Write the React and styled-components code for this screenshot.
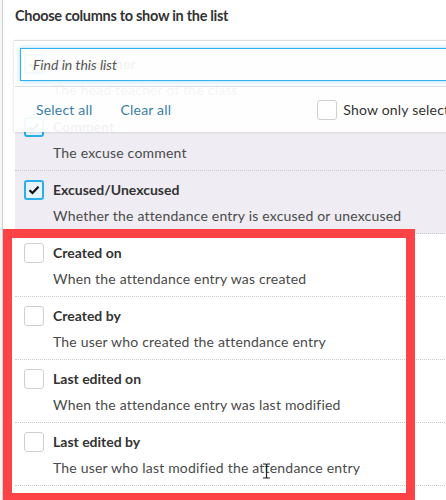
import React from "react";
import styled, {createGlobalStyle} from "styled-components";

const GlobalStyle = createGlobalStyle`
    html, body {
        margin: 0;
        padding: 0;
        background: #f6f6f6;
        overflow: hidden;
    }
    body {
        font-family: Lato, "Open Sans", "Liberation Sans", sans-serif;
        color: #333;
    }
`;

const Page = styled.div`
    position: relative;
    width: 446px;
    height: 500px;
    overflow: hidden;
    padding-left: 2px;
    box-sizing: border-box;
`;

const Dialog = styled.div`
    width: 720px;
    height: 100%;
    background: #fff;
    border-left: 1px solid #cfcfcf;
`;

const Header = styled.div`
    height: 40px;
    box-sizing: border-box;
    padding: 7px 12px 0;
    line-height: 18px;
    font-size: 14.5px;
    font-weight: 700;
    color: #333;
    letter-spacing: -0.3px;
`;

const Body = styled.div`
    position: relative;
    margin-left: 11px;
`;

const List = styled.div`
    padding-top: 4px;
    border-top: 1px solid #dcdcdc;
    margin-left: 1px;
`;

const Row = styled.div`
    display: flex;
    gap: 9px;
    padding: 9px 0 0 9px;
    box-sizing: border-box;
    height: 63px;
    border-bottom: 1px dotted #c9c9c9;
    background: ${props => (props.selected ? "#efedf3" : "#fff")};
`;

const Box = styled.div`
    flex: none;
    width: 20px;
    height: 20px;
    box-sizing: border-box;
    border-radius: 3px;
    border: ${props => (props.checked ? "2px solid #2aaeee" : "1px solid #cfcfcf")};
    background: ${props => (props.checked ? "#e8f4fc" : "#fff")};
    display: flex;
    align-items: center;
    justify-content: center;
`;

const Texts = styled.div`
    display: flex;
    flex-direction: column;
`;

const Title = styled.div`
    font-size: 14px;
    font-weight: 700;
    line-height: 20px;
    color: #333;
`;

const Desc = styled.div`
    font-size: 14px;
    line-height: 20px;
    margin-top: 6px;
    color: #4a4a4a;
    letter-spacing: 0.2px;
`;

const Toolbar = styled.div`
    position: absolute;
    top: 0;
    left: 0;
    right: 0;
    height: 92px;
    background: rgba(255, 255, 255, 0.94);
    border-top: 1px solid #dcdcdc;
    box-shadow: 0 1px 2px rgba(0, 0, 0, 0.08), -1px 0 2px rgba(0, 0, 0, 0.06);
    box-sizing: border-box;
`;

const SearchArea = styled.div`
    padding: 7px 0 5px 5px;
    border-bottom: 1px solid #dedede;
    margin-left: 1px;
`;

const Search = styled.input`
    display: block;
    width: 100%;
    height: 33px;
    box-sizing: border-box;
    border: 1px solid #31b2ee;
    box-shadow: 0 0 5px rgba(49, 178, 238, 0.45);
    background: transparent;
    padding: 0 12px;
    font-family: inherit;
    font-size: 14px;
    font-style: italic;
    outline: none;
    &::placeholder {
        color: #555;
        opacity: 1;
    }
`;

const Actions = styled.div`
    display: flex;
    align-items: center;
    height: 45px;
    padding-left: 22px;
`;

const LinkButton = styled.span`
    font-size: 14px;
    color: #3a7ea9;
    letter-spacing: 0.2px;
    margin-right: ${props => props.space || 0}px;
`;

const ShowOnly = styled.label`
    display: flex;
    align-items: center;
    gap: 6px;
    font-size: 14px;
    color: #333;
    margin-left: 146px;
    white-space: nowrap;
    letter-spacing: 0.2px;
`;

const Highlight = styled.div`
    position: absolute;
    left: 3px;
    top: 229px;
    width: 412px;
    height: 273px;
    box-sizing: border-box;
    border: 9px solid #fd4346;
    pointer-events: none;
`;

const Cursor = styled.svg`
    position: absolute;
    left: 262px;
    top: 463px;
`;

const Check = () => (
    <svg width="12" height="10" viewBox="0 0 12 10">
        <path d="M1.5 5.2 L4.5 8 L10.5 1.8" fill="none" stroke="#111" strokeWidth="2.2"/>
    </svg>
);

const columns = [
    {title: "Class teacher", desc: "The head teacher of the class", on: true},
    {title: "Comment", desc: "The excuse comment", on: true},
    {title: "Excused/Unexcused", desc: "Whether the attendance entry is excused or unexcused", on: true},
    {title: "Created on", desc: "When the attendance entry was created", on: false},
    {title: "Created by", desc: "The user who created the attendance entry", on: false},
    {title: "Last edited on", desc: "When the attendance entry was last modified", on: false},
    {title: "Last edited by", desc: "The user who last modified the attendance entry", on: false},
];

const App = () => {
    return (
        <Page>
            <GlobalStyle/>
            <Dialog>
                <Header>Choose columns to show in the list</Header>
                <Body>
                    <List>
                        {columns.map(c => (
                            <Row key={c.title} selected={c.on}>
                                <Box checked={c.on}>{c.on && <Check/>}</Box>
                                <Texts>
                                    <Title>{c.title}</Title>
                                    <Desc>{c.desc}</Desc>
                                </Texts>
                            </Row>
                        ))}
                    </List>
                    <Toolbar>
                        <SearchArea>
                            <Search placeholder="Find in this list"/>
                        </SearchArea>
                        <Actions>
                            <LinkButton space={28}>Select all</LinkButton>
                            <LinkButton>Clear all</LinkButton>
                            <ShowOnly>
                                <Box/>
                                Show only selected
                            </ShowOnly>
                        </Actions>
                    </Toolbar>
                </Body>
            </Dialog>
            <Highlight/>
            <Cursor width="9" height="16" viewBox="0 0 9 16">
                <path d="M1 1 H3.5 Q4.5 1 4.5 2.5 V13.5 Q4.5 15 3.5 15 H1 M8 1 H5.5 Q4.5 1 4.5 2.5 M4.5 13.5 Q4.5 15 5.5 15 H8" fill="none" stroke="#222" strokeWidth="1.2"/>
            </Cursor>
        </Page>
    );
};

export default App;
